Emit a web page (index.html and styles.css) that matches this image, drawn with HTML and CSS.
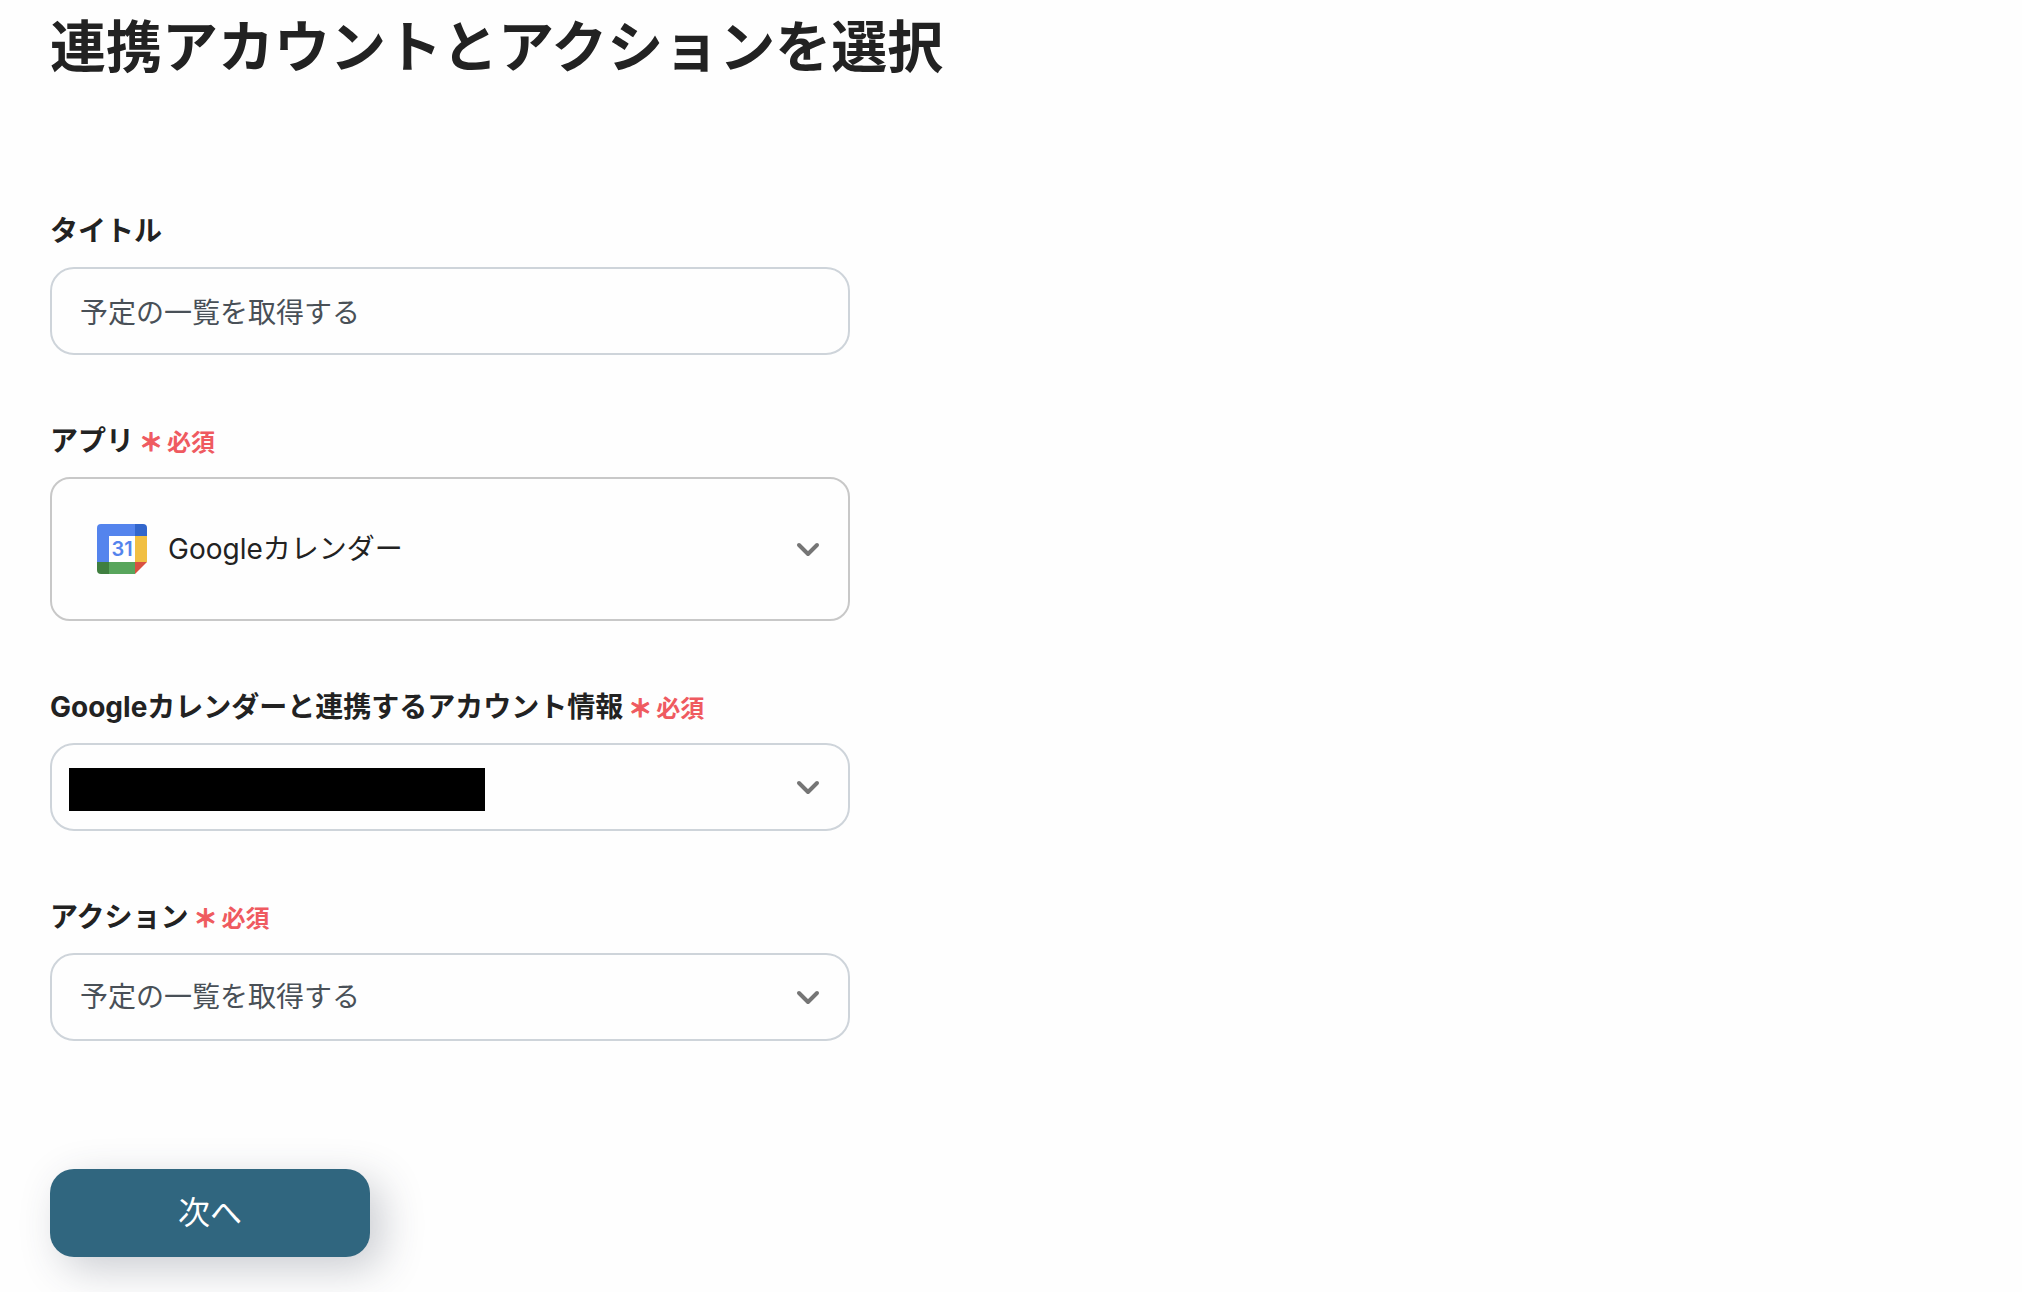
FILE: index.html
```html
<!DOCTYPE html>
<html lang="ja">
<head>
    <meta charset="UTF-8">
    <meta name="viewport" content="width=device-width, initial-scale=1.0">
    <title>連携アカウントとアクションを選択</title>
    <link rel="stylesheet" href="styles.css">
</head>
<body>
    <main class="page">
        <h1>連携アカウントとアクションを選択</h1>
        <form class="form">
            <div class="field">
                <div class="label-row">
                    <label for="title">タイトル</label>
                </div>
                <input class="control" type="text" id="title" value="予定の一覧を取得する">
            </div>
            <div class="field">
                <div class="label-row">
                    <label for="app">アプリ</label>
                    <span class="required"><span class="star">＊</span><span>必須</span></span>
                </div>
                <div class="select-box">
                    <select class="control app" id="app">
                        <option>Googleカレンダー</option>
                    </select>
                    <svg class="app-icon" viewBox="0 0 50 50" aria-hidden="true">
                        <path fill="#fff" d="M12 12h26v26H12z"/>
                        <path fill="#5484ed" d="M4 0h34v12H12v26H0V4a4 4 0 0 1 4-4z"/>
                        <path fill="#3266cc" d="M38 0h8a4 4 0 0 1 4 4v8H38z"/>
                        <path fill="#f1bf42" d="M38 12h12v26H38z"/>
                        <path fill="#58a55c" d="M12 38h26v12H12z"/>
                        <path fill="#3f7f40" d="M0 38h12v12H4a4 4 0 0 1-4-4z"/>
                        <path fill="#d95040" d="M38 38h12L38 50z"/>
                        <text class="app-day" x="25" y="32" text-anchor="middle">31</text>
                    </svg>
                    <svg class="chevron" viewBox="0 0 24 24" aria-hidden="true"><path d="M3 8l9 9 9-9"/></svg>
                </div>
            </div>
            <div class="field">
                <div class="label-row">
                    <label for="account">Googleカレンダーと連携するアカウント情報</label>
                    <span class="required"><span class="star">＊</span><span>必須</span></span>
                </div>
                <div class="select-box">
                    <select class="control" id="account">
                        <option></option>
                    </select>
                    <span class="mask"></span>
                    <svg class="chevron" viewBox="0 0 24 24" aria-hidden="true"><path d="M3 8l9 9 9-9"/></svg>
                </div>
            </div>
            <div class="field">
                <div class="label-row">
                    <label for="action">アクション</label>
                    <span class="required"><span class="star">＊</span><span>必須</span></span>
                </div>
                <div class="select-box">
                    <select class="control" id="action">
                        <option>予定の一覧を取得する</option>
                    </select>
                    <svg class="chevron" viewBox="0 0 24 24" aria-hidden="true"><path d="M3 8l9 9 9-9"/></svg>
                </div>
            </div>
            <button class="next" type="button">次へ</button>
        </form>
    </main>
</body>
</html>
```
FILE: styles.css
```css
*
{
    box-sizing: border-box;
}
body
{
    margin: 0;
    min-height: 100vh;
    background-color: #fefefe;
    color: #222;
    font-family: Inter, "Noto Sans CJK JP", sans-serif;
    font-size: 28px;
}
.page
{
    padding: 5px 50px 32px;
}
h1
{
    margin: 0 0 122px;
    font-size: 56px;
    font-weight: bold;
    line-height: 84px;
}
.form
{
    display: flex;
    flex-direction: column;
    gap: 66px;
    max-width: 800px;
}
.label-row
{
    display: flex;
    align-items: baseline;
    gap: 5px;
    margin-bottom: 16px;
    font-weight: bold;
    line-height: 40px;
}
.required
{
    display: flex;
    gap: 4px;
    color: #ef5a60;
    font-size: 24px;
    line-height: 32px;
}
.star
{
    -webkit-text-stroke: 1px #ef5a60;
}
.control
{
    display: block;
    width: 100%;
    height: 88px;
    padding: 0 28px;
    border: 2px solid #ced4da;
    border-radius: 24px;
    background-color: #fefefe;
    color: #495057;
    font-family: inherit;
    font-size: 28px;
    line-height: 40px;
    appearance: none;
}
.select-box
{
    position: relative;
}
.app
{
    height: 144px;
    padding-left: 116px;
    border-color: #c8c8c8;
    border-radius: 20px;
    color: #222;
}
.app-icon
{
    position: absolute;
    left: 47px;
    top: calc(50% - 25px);
    width: 50px;
    height: 50px;
    pointer-events: none;
}
.app-day
{
    fill: #5484ed;
    font-size: 20px;
    font-weight: 600;
}
.chevron
{
    position: absolute;
    right: 30px;
    top: calc(50% - 12px);
    width: 24px;
    height: 24px;
    fill: none;
    stroke: #757575;
    stroke-width: 4;
    stroke-linecap: round;
    stroke-linejoin: round;
    pointer-events: none;
}
.mask
{
    position: absolute;
    left: 19px;
    top: 25px;
    width: 52%;
    height: 43px;
    background-color: #000;
    pointer-events: none;
}
.next
{
    width: 320px;
    margin-top: 62px;
    padding: 20px;
    border: none;
    border-radius: 24px;
    background-color: #30667f;
    box-shadow: 12px 12px 40px rgba(50, 60, 80, 0.25);
    color: #fff;
    font-family: inherit;
    font-size: 32px;
    line-height: 48px;
    cursor: pointer;
}
```
